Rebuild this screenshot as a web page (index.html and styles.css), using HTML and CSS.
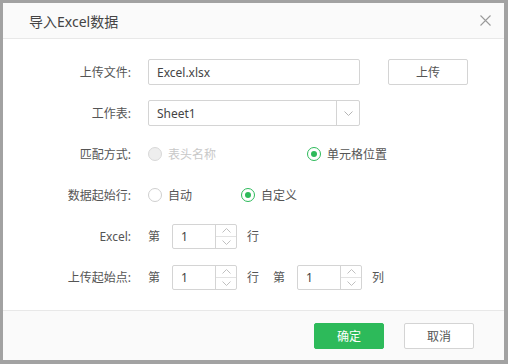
FILE: index.html
```html
<!DOCTYPE html>
<html lang="zh-CN">
<head>
    <meta charset="UTF-8">
    <title>导入Excel数据</title>
    <link rel="stylesheet" href="styles.css">
</head>
<body>
    <div class="dialog">
        <div class="dialog-header">
            <span class="dialog-title">导入Excel数据</span>
            <svg class="close" width="11" height="11" viewBox="0 0 11 11">
                <path d="M0.5 0.5 L10.5 10.5 M10.5 0.5 L0.5 10.5" stroke="#9a9a9a" stroke-width="1.1" fill="none"/>
            </svg>
        </div>

        <div class="dialog-body">
            <div class="form-row">
                <label class="form-label">上传文件:</label>
                <div class="text-input file-input">Excel.xlsx</div>
                <button class="btn upload-btn">上传</button>
            </div>

            <div class="form-row">
                <label class="form-label">工作表:</label>
                <div class="select">
                    <span class="select-value">Sheet1</span>
                    <span class="select-arrow">
                        <svg width="9" height="5" viewBox="0 0 9 5">
                            <path d="M0.5 0.5 L4.5 4.5 L8.5 0.5" stroke="#b5b5b5" fill="none"/>
                        </svg>
                    </span>
                </div>
            </div>

            <div class="form-row">
                <label class="form-label">匹配方式:</label>
                <span class="radio disabled match-first"><i></i>表头名称</span>
                <span class="radio checked"><i></i>单元格位置</span>
            </div>

            <div class="form-row">
                <label class="form-label">数据起始行:</label>
                <span class="radio start-first"><i></i>自动</span>
                <span class="radio checked"><i></i>自定义</span>
            </div>

            <div class="form-row">
                <label class="form-label">Excel:</label>
                <span class="unit">第</span>
                <div class="number-input">
                    <span class="number-value">1</span>
                    <span class="spinner">
                        <span class="spin-up"><svg width="9" height="5" viewBox="0 0 9 5"><path d="M0.5 4.5 L4.5 0.5 L8.5 4.5" stroke="#c0c0c0" fill="none"/></svg></span>
                        <span class="spin-down"><svg width="9" height="5" viewBox="0 0 9 5"><path d="M0.5 0.5 L4.5 4.5 L8.5 0.5" stroke="#c0c0c0" fill="none"/></svg></span>
                    </span>
                </div>
                <span class="unit after">行</span>
            </div>

            <div class="form-row">
                <label class="form-label">上传起始点:</label>
                <span class="unit">第</span>
                <div class="number-input">
                    <span class="number-value">1</span>
                    <span class="spinner">
                        <span class="spin-up"><svg width="9" height="5" viewBox="0 0 9 5"><path d="M0.5 4.5 L4.5 0.5 L8.5 4.5" stroke="#c0c0c0" fill="none"/></svg></span>
                        <span class="spin-down"><svg width="9" height="5" viewBox="0 0 9 5"><path d="M0.5 0.5 L4.5 4.5 L8.5 0.5" stroke="#c0c0c0" fill="none"/></svg></span>
                    </span>
                </div>
                <span class="unit after">行</span>
                <span class="unit second">第</span>
                <div class="number-input">
                    <span class="number-value">1</span>
                    <span class="spinner">
                        <span class="spin-up"><svg width="9" height="5" viewBox="0 0 9 5"><path d="M0.5 4.5 L4.5 0.5 L8.5 4.5" stroke="#c0c0c0" fill="none"/></svg></span>
                        <span class="spin-down"><svg width="9" height="5" viewBox="0 0 9 5"><path d="M0.5 0.5 L4.5 4.5 L8.5 0.5" stroke="#c0c0c0" fill="none"/></svg></span>
                    </span>
                </div>
                <span class="unit after">列</span>
            </div>
        </div>

        <div class="dialog-footer">
            <button class="btn btn-primary">确定</button>
            <button class="btn">取消</button>
        </div>
    </div>
</body>
</html>
```

FILE: styles.css
```css
body {
    margin: 0;
    padding: 0;
    background-color: #a2a2a2;
    font-family: "Noto Sans", "Noto Sans CJK SC", sans-serif;
    font-size: 12px;
    color: #555;
}

.dialog {
    margin: 3px 4px 4px 3px;
    height: 357px;
    background-color: #fff;
    display: flex;
    flex-direction: column;
}

.dialog-header {
    height: 35px;
    flex-shrink: 0;
    padding: 0 13px 0 26px;
    display: flex;
    align-items: center;
    justify-content: space-between;
    background-color: #fafafa;
    border-bottom: 1px solid #e8e8e8;
}

.dialog-title {
    font-size: 14px;
    color: #444;
}

.dialog-body {
    flex: 1;
    padding-top: 20px;
}

.form-row {
    height: 26px;
    display: flex;
    align-items: center;
    margin-bottom: 15px;
}

.form-label {
    width: 128px;
    margin-right: 17px;
    text-align: right;
    color: #555;
}

/* inputs */
.text-input {
    box-sizing: border-box;
    height: 26px;
    border: 1px solid #d4d4d4;
    border-radius: 2px;
    padding: 0 8px;
    display: flex;
    align-items: center;
    color: #444;
}

.file-input {
    width: 212px;
}

.select {
    box-sizing: border-box;
    width: 212px;
    height: 26px;
    border: 1px solid #d4d4d4;
    border-radius: 2px;
    display: flex;
    color: #444;
}

.select-value {
    flex: 1;
    padding-left: 8px;
    display: flex;
    align-items: center;
}

.select-arrow {
    width: 22px;
    border-left: 1px solid #d4d4d4;
    display: flex;
    align-items: center;
    justify-content: center;
}

.btn {
    box-sizing: border-box;
    width: 80px;
    height: 26px;
    border: 1px solid #d4d4d4;
    border-radius: 2px;
    background-color: #fff;
    color: #555;
    font-family: inherit;
    font-size: 12px;
    padding: 0;
    cursor: pointer;
}

.upload-btn {
    margin-left: 28px;
}

/* radios */
.radio {
    display: flex;
    align-items: center;
    color: #555;
}

.radio i {
    box-sizing: border-box;
    width: 14px;
    height: 14px;
    border: 1px solid #cfcfcf;
    border-radius: 50%;
    margin-right: 6px;
    display: flex;
    align-items: center;
    justify-content: center;
    background-color: #fff;
}

.radio.checked i {
    border-color: #2dba5a;
}

.radio.checked i::after {
    content: "";
    width: 6px;
    height: 6px;
    border-radius: 50%;
    background-color: #2dba5a;
}

.radio.disabled {
    color: #c8c8c8;
}

.radio.disabled i {
    background-color: #eee;
    border-color: #d8d8d8;
}

.match-first {
    width: 159px;
}

.start-first {
    width: 93px;
}

/* number inputs */
.unit {
    width: 24px;
    color: #555;
}

.unit.after {
    width: auto;
    margin-left: 10px;
}

.unit.second {
    margin-left: 14px;
}

.number-input {
    box-sizing: border-box;
    width: 65px;
    height: 25px;
    border: 1px solid #d4d4d4;
    border-radius: 2px;
    display: flex;
}

.number-value {
    flex: 1;
    padding-left: 8px;
    display: flex;
    align-items: center;
    color: #444;
}

.spinner {
    width: 20px;
    border-left: 1px solid #d4d4d4;
    display: flex;
    flex-direction: column;
}

.spin-up,
.spin-down {
    flex: 1;
    display: flex;
    align-items: center;
    justify-content: center;
}

.spin-up {
    border-bottom: 1px solid #e2e2e2;
}

/* footer */
.dialog-footer {
    height: 49px;
    flex-shrink: 0;
    border-top: 1px solid #e8e8e8;
    background-color: #fafafa;
    display: flex;
    align-items: center;
    justify-content: flex-end;
    gap: 20px;
    padding-right: 30px;
}

.dialog-footer .btn {
    width: 70px;
}

.btn-primary {
    background-color: #2dba5a;
    border-color: #2dba5a;
    color: #fff;
}
```
